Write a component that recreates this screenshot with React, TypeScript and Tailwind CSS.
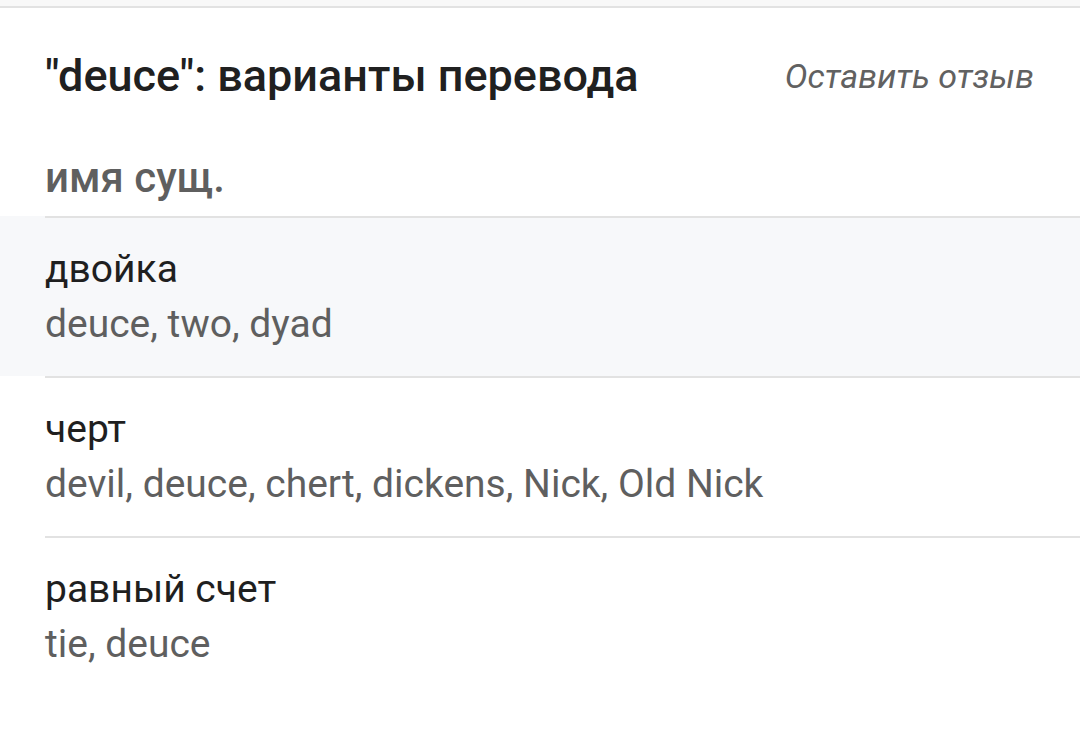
import React from 'react';

const rows = [
  { word: 'двойка', translations: 'deuce, two, dyad', active: true },
  { word: 'черт', translations: 'devil, deuce, chert, dickens, Nick, Old Nick', active: false },
  { word: 'равный счет', translations: 'tie, deuce', active: false },
];

function TranslationRow({ word, translations, active }: { word: string; translations: string; active: boolean }) {
  return (
    <div className={active ? 'bg-[#f7f8fa]' : 'bg-white'}>
      <div className="ml-[45px] border-t-2 border-[#e2e2e2] h-[160px] pt-[25px]">
        <div className="text-[39px] leading-[52px] text-[#1f1f1f]">{word}</div>
        <div className="text-[39px] leading-[52px] text-[#5f5f5f] mt-[3px]">{translations}</div>
      </div>
    </div>
  );
}

export default function App() {
  return (
    <div className="w-[1080px] h-[740px] bg-white overflow-hidden font-['Roboto',sans-serif]">
      <div className="h-[8px] bg-[#f8f8f8] border-b-2 border-[#e2e2e2]" />
      <div className="flex items-center justify-between pl-[45px] pr-[46px] h-[136px]">
        <h1 className="text-[45px] font-medium text-[#202020]">"deuce": варианты перевода</h1>
        <span className="text-[34px] italic text-[#616161]">Оставить отзыв</span>
      </div>
      <div className="pl-[45px] h-[72px] pt-[2px] text-[42px] font-medium text-[#5f5f5f] leading-[64px]">имя сущ.</div>
      {rows.map((r) => (
        <TranslationRow key={r.word} {...r} />
      ))}
    </div>
  );
}
